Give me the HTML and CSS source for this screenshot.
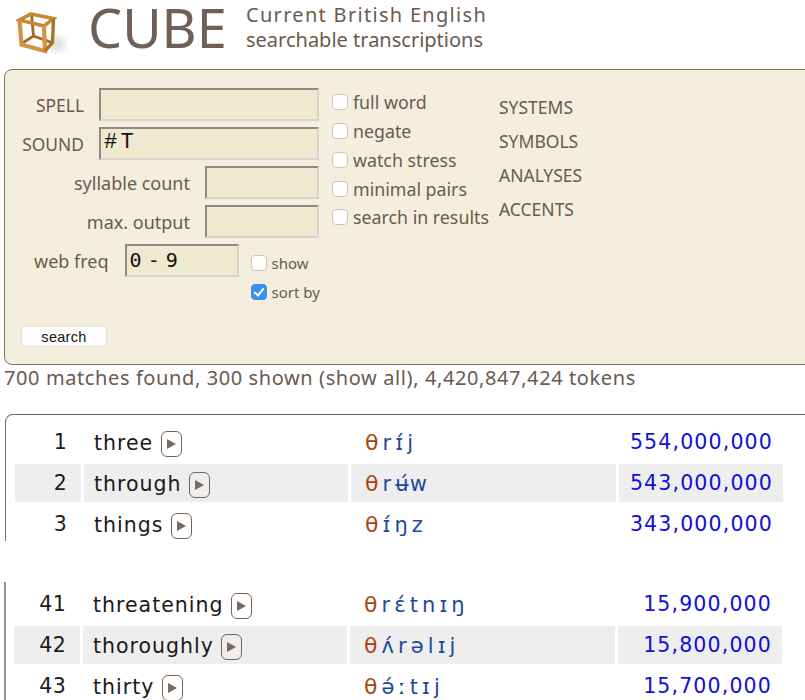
FILE: index.html
```html
<!DOCTYPE html>
<html lang="en">
<head>
<meta charset="utf-8">
<title>CUBE</title>
<link rel="stylesheet" href="styles.css">
</head>
<body>
<header class="masthead">
  <svg class="logo" width="70" height="68" viewBox="0 0 70 68" aria-hidden="true">
    <defs>
      <filter id="soft"><feGaussianBlur stdDeviation="3"/></filter>
      <filter id="tiny"><feGaussianBlur stdDeviation="0.3"/></filter>
    </defs>
    <ellipse cx="57" cy="44" rx="9" ry="8" fill="#c9c5c0" opacity="0.5" filter="url(#soft)"/>
    <g fill="none" stroke-linejoin="miter" filter="url(#tiny)">
      <g stroke="#a26c24" stroke-width="2.8">
        <path d="M31.5 14 L33.5 36 L53 43"/>
        <path d="M33.5 36 L21 44"/>
      </g>
      <g stroke="#c58a35" stroke-width="3.6">
        <path d="M31 14 L53.5 18.5 L44 26 L19.5 20 Z"/>
      </g>
      <g stroke="#d0953f" stroke-width="4.2">
        <path d="M19.5 20 L21.5 44.5 L45 51 L44 26"/>
      </g>
      <g stroke="#a9732a" stroke-width="3.4">
        <path d="M53.5 18.5 L52.5 42.5 L45 51"/>
      </g>
    </g>
  </svg>
  <h1 class="brand">CUBE</h1>
  <p class="tagline"><span class="tagline-top">Current British English</span><span>searchable transcriptions</span></p>
</header>

<form class="panel">
  <div class="panel-main">
    <div class="fields">
      <div class="field"><label class="caps">SPELL</label><input class="box wide" type="text"></div>
      <div class="field"><label class="caps">SOUND</label><input class="box wide sound" type="text" value="# T"></div>
      <div class="field"><label>syllable count</label><input class="box short" type="text"></div>
      <div class="field"><label>max. output</label><input class="box short" type="text"></div>
      <div class="field freq">
        <label>web freq</label><input class="box short digits" type="text" value="0 - 9">
        <div class="freq-opts">
          <label class="opt small"><input class="check" type="checkbox">show</label>
          <label class="opt small"><input class="check" type="checkbox" checked>sort by</label>
        </div>
      </div>
    </div>
    <div class="options">
      <label class="opt"><input class="check" type="checkbox">full word</label>
      <label class="opt"><input class="check" type="checkbox">negate</label>
      <label class="opt"><input class="check" type="checkbox">watch stress</label>
      <label class="opt"><input class="check" type="checkbox">minimal pairs</label>
      <label class="opt"><input class="check" type="checkbox">search in results</label>
    </div>
    <nav class="links">
      <a>SYSTEMS</a><a>SYMBOLS</a><a>ANALYSES</a><a>ACCENTS</a>
    </nav>
  </div>
  <button class="go" type="button">search</button>
</form>

<p class="summary">700 matches found, 300 shown (show all), 4,420,847,424 tokens</p>

<section class="results first">
  <table>
    <tr><td class="n">1</td><td class="w">three <span class="play"></span></td><td class="p"><b>θ</b> r ɪ́ j</td><td class="f">554,000,000</td></tr>
    <tr class="alt"><td class="n">2</td><td class="w">through <span class="play"></span></td><td class="p"><b>θ</b> r ʉ́w</td><td class="f">543,000,000</td></tr>
    <tr><td class="n">3</td><td class="w">things <span class="play"></span></td><td class="p"><b>θ</b> ɪ́ ŋ z</td><td class="f">343,000,000</td></tr>
  </table>
</section>

<section class="results second">
  <table>
    <tr><td class="n">41</td><td class="w">threatening <span class="play"></span></td><td class="p"><b>θ</b> r ɛ́ t n ɪ ŋ</td><td class="f">15,900,000</td></tr>
    <tr class="alt"><td class="n">42</td><td class="w">thoroughly <span class="play"></span></td><td class="p"><b>θ</b> ʌ́ r ə l ɪ j</td><td class="f">15,800,000</td></tr>
    <tr><td class="n">43</td><td class="w">thirty <span class="play"></span></td><td class="p"><b>θ</b> ə́ ː t ɪ j</td><td class="f">15,700,000</td></tr>
  </table>
</section>
</body>
</html>
```
FILE: styles.css
```css
html, body { margin: 0; padding: 0; height: 700px; overflow: hidden; background: #fff; }
body { font-family: "Noto Sans", sans-serif; color: #6b5a4e; }

.masthead { display: flex; align-items: flex-start; height: 69px; }
.logo { flex: none; }
.brand { margin: 0 0 0 18px; font-family: "Noto Sans", sans-serif; font-weight: 400; font-size: 54px; line-height: 54px; color: #6f5f54; width: 158px; }
.tagline { margin: 2px 0 0 0; font-size: 20px; line-height: 25px; display: flex; flex-direction: column; color: #6b5a4e; }
.tagline-top { letter-spacing: 1.3px; }

.panel { box-sizing: border-box; height: 296px; width: 830px; margin-left: 4px; padding: 18px 0 0 0; background: #f4efdc; border: 1px solid #7d7065; border-radius: 8px; }
.panel-main { display: flex; align-items: flex-start; height: 238px; }
.fields { width: 314px; display: flex; flex-direction: column; gap: 6px; }
.field { display: flex; justify-content: flex-end; align-items: center; gap: 15px; height: 33px; }
.field label { font-size: 18px; white-space: nowrap; }
.field label.caps { font-size: 17.4px; }
.field label.opt { font-size: 15px; }
.box { box-sizing: border-box; height: 33px; background: #efe9d0; border: 2px solid; border-color: #8e8b85 #d5d4cf #d5d4cf #8e8b85; padding: 0 3px; margin: 0; color: #111; outline: none; }
.wide { width: 220px; }
.short { width: 114px; flex: none; }
.sound { font-family: "Liberation Mono", monospace; font-size: 22px; word-spacing: -10px; padding-bottom: 2px; }
.digits { font-family: "DejaVu Sans Mono", monospace; font-size: 20px; word-spacing: -6px; padding-bottom: 2px; }

.freq { justify-content: flex-start; padding-left: 29px; gap: 15px; }
.freq > .box { margin-left: 1px; margin-right: -3px; }
.freq-opts { display: flex; flex-direction: column; gap: 9px; padding-top: 34px; }

.check { appearance: none; -webkit-appearance: none; box-sizing: border-box; width: 16px; height: 16px; margin: 0; flex: none; background: #fff; border: 1px solid #c9c7c2; border-radius: 4px; position: relative; }
.check:checked { background: #3d8ef0; border-color: #3d8ef0; }
.check:checked::after { content: ""; position: absolute; left: 4px; top: 1px; width: 4px; height: 8px; border: solid #fff; border-width: 0 2px 2px 0; transform: rotate(40deg); }

.opt { display: flex; align-items: center; gap: 5px; white-space: nowrap; }
.small { height: 20px; }

.options { display: flex; flex-direction: column; margin: 0 0 0 13px; width: 167px; font-size: 17.8px; }
.options .opt { height: 28.75px; }
.links { display: flex; flex-direction: column; gap: 11px; font-size: 17.5px; margin-top: 8px; }
.links a { line-height: 23px; color: #6b5a4e; }

.go { display: block; box-sizing: border-box; width: 86px; height: 21px; margin: 0 0 0 16px; padding: 0; background: #fff; border: 1px solid #e4e1d6; border-radius: 4px; font-family: "Liberation Sans", sans-serif; font-size: 14.5px; color: #111; letter-spacing: 0.3px; }

.summary { margin: 0 0 0 4px; font-size: 20px; letter-spacing: 0.6px; line-height: 25px; height: 49px; color: #6b5a4e; }

.results { width: 800px; overflow: hidden; }
.first { box-sizing: border-box; margin-left: 5px; height: 127px; border-top: 1px solid #7a6453; border-left: 1px solid #7a6e64; border-top-left-radius: 8px; padding: 5px 0 0 6px; }
.second { margin-left: 4px; margin-top: 41px; border-left: 2px solid #9a918a; height: 140px; padding: 0 0 0 5px; box-sizing: border-box; }

table { border-collapse: separate; border-spacing: 3px; table-layout: fixed; width: 774px; }
td { height: 38px; padding: 0; font-family: "DejaVu Sans", sans-serif; font-size: 20.5px; letter-spacing: 1px; color: #1a1a1a; white-space: nowrap; }
.alt td { background: #eeeeee; }
.n { width: 66px; text-align: right; padding-right: 14px; box-sizing: border-box; letter-spacing: 0.3px; }
.w { width: 264px; padding-left: 10px; padding-top: 3px; box-sizing: border-box; }
.p { width: 265px; padding-left: 14px; box-sizing: border-box; color: #1c4a9c; letter-spacing: 1.2px; word-spacing: -5px; font-size: 21px; }
.p b { font-weight: 400; color: #a8470f; font-size: 22px; }
.f { text-align: right; padding-right: 10px; box-sizing: border-box; color: #1010d8; letter-spacing: 1.15px; }

.play { display: inline-block; box-sizing: border-box; width: 21px; height: 26px; border: 1px solid #75655a; border-radius: 6px; vertical-align: -7px; position: relative; margin-left: 0; }
.play::after { content: ""; position: absolute; left: 5px; top: 7px; border-style: solid; border-width: 5px 0 5px 9px; border-color: transparent transparent transparent #7a6a5e; }
```
